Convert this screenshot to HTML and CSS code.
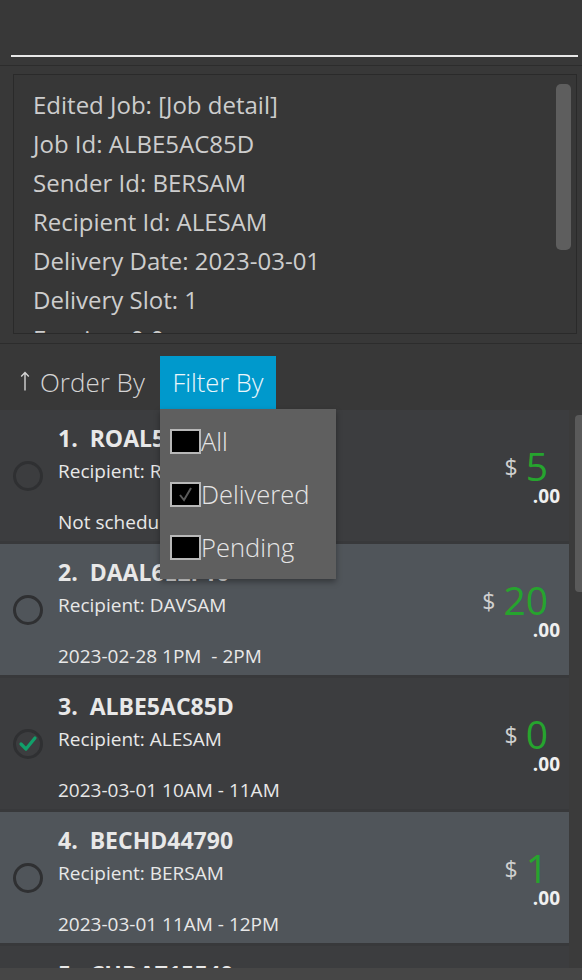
FILE: index.html
```html
<!DOCTYPE html>
<html>
<head>
<meta charset="utf-8">
<link rel="stylesheet" href="styles.css">
</head>
<body>
<div class="app">
  <div class="cmd"><div class="cmd-line"></div></div>

  <div class="detail-wrap">
    <div class="detail">
      <div class="detail-text">
        <p>Edited Job: [Job detail]</p>
        <p>Job Id: ALBE5AC85D</p>
        <p>Sender Id: BERSAM</p>
        <p>Recipient Id: ALESAM</p>
        <p>Delivery Date: 2023-03-01</p>
        <p>Delivery Slot: 1</p>
        <p>Earning: 0.0</p>
      </div>
      <div class="vscroll"><div class="vthumb"></div></div>
    </div>
  </div>

  <div class="toolbar">
    <span class="order"><svg class="arrow" viewBox="0 0 10 20" width="10" height="20"><path d="M5 1.5 V19.5 M1.2 5.5 L5 1.5 L8.8 5.5" fill="none" stroke="#d4d4d4" stroke-width="1.4"/></svg>Order By</span>
    <div class="filter-wrap">
      <div class="filter">Filter By</div>
      <div class="menu">
        <div class="menu-row"><span class="cbox"></span><span class="mlabel">All</span></div>
        <div class="menu-row"><span class="cbox"><svg viewBox="0 0 31 25" width="31" height="25"><path d="M10 13 L14 18 L21 6" fill="none" stroke="#5a5a5a" stroke-width="2"/></svg></span><span class="mlabel">Delivered</span></div>
        <div class="menu-row"><span class="cbox"></span><span class="mlabel">Pending</span></div>
      </div>
    </div>
  </div>

  <div class="list-wrap">
    <div class="list">
      <div class="item">
        <span class="radio"></span>
        <div class="info">
          <div class="title">1.  ROAL5B7C2E</div>
          <div class="sub">Recipient: ROBSAM</div>
          <div class="date">Not scheduled</div>
        </div>
        <div class="price"><div class="amt"><span class="cur">$</span><span class="num">5</span></div><div class="cents">.00</div></div>
      </div>
      <div class="item alt">
        <span class="radio"></span>
        <div class="info">
          <div class="title">2.  DAAL6E2F10</div>
          <div class="sub">Recipient: DAVSAM</div>
          <div class="date">2023-02-28 1PM  - 2PM</div>
        </div>
        <div class="price"><div class="amt"><span class="cur">$</span><span class="num">20</span></div><div class="cents">.00</div></div>
      </div>
      <div class="item">
        <span class="radio done"><svg viewBox="0 0 30 30" width="30" height="30"><path d="M8 15 L13 20 L22 9" fill="none" stroke="#11a06a" stroke-width="3.2" stroke-linecap="round" stroke-linejoin="round"/></svg></span>
        <div class="info">
          <div class="title">3.  ALBE5AC85D</div>
          <div class="sub">Recipient: ALESAM</div>
          <div class="date">2023-03-01 10AM - 11AM</div>
        </div>
        <div class="price"><div class="amt"><span class="cur">$</span><span class="num">0</span></div><div class="cents">.00</div></div>
      </div>
      <div class="item alt">
        <span class="radio"></span>
        <div class="info">
          <div class="title">4.  BECHD44790</div>
          <div class="sub">Recipient: BERSAM</div>
          <div class="date">2023-03-01 11AM - 12PM</div>
        </div>
        <div class="price"><div class="amt"><span class="cur">$</span><span class="num">1</span></div><div class="cents">.00</div></div>
      </div>
      <div class="item">
        <span class="radio"></span>
        <div class="info">
          <div class="title">5.  CHDA715E40</div>
          <div class="sub">Recipient: CHASAM</div>
          <div class="date">Not scheduled</div>
        </div>
        <div class="price"><div class="amt"><span class="cur">$</span><span class="num">3</span></div><div class="cents">.00</div></div>
      </div>
    </div>
    <div class="list-scroll"><div class="lthumb"></div></div>
  </div>

  <div class="status"></div>
</div>
</body>
</html>
```

FILE: styles.css
```css
* { box-sizing: border-box; }
html, body { margin: 0; padding: 0; }
body {
  background: #383838;
  font-family: "Open Sans", "Noto Sans", sans-serif;
  width: 582px;
  height: 980px;
  overflow: hidden;
}
.app {
  display: flex;
  flex-direction: column;
  height: 980px;
}
.cmd {
  height: 66px;
  border-bottom: 1px solid #2c2c2c;
  padding: 55px 4px 0 11px;
}
.cmd-line {
  height: 2px;
  background: #e8e8e8;
}
.detail-wrap {
  height: 278px;
  padding: 8px 5px 0 13px;
  border-bottom: 1px solid #2c2c2c;
}
.detail {
  height: 260px;
  border: 1px solid #2a2a2a;
  background: #373737;
  display: flex;
  overflow: hidden;
}
.detail-text {
  flex: 1;
  padding: 10px 0 0 19px;
  overflow: hidden;
}
.detail-text p {
  margin: 0;
  height: 39px;
  line-height: 39px;
  font-size: 24px;
  color: #cdcdcd;
  white-space: nowrap;
}
.vscroll {
  width: 21px;
  padding: 9px 5px 0 1px;
}
.vthumb {
  height: 166px;
  background: #5e5e5e;
  border-radius: 5px;
}
.toolbar {
  height: 66px;
  display: flex;
  align-items: center;
  padding: 11px 0 1px 20px;
}
.order {
  width: 140px;
  font-size: 26px;
  font-weight: 300;
  color: #d4d4d4;
  display: flex;
  align-items: center;
}
.arrow { margin: 0 10px 2px 0; flex: 0 0 10px; }
.filter-wrap {
  position: relative;
  height: 53px;
}
.filter {
  height: 53px;
  width: 116px;
  background: #0099cc;
  color: #eaf6fb;
  font-size: 25.5px;
  font-weight: 300;
  display: flex;
  align-items: center;
  justify-content: center;
}
.menu {
  position: absolute;
  left: 0;
  top: 53px;
  width: 176px;
  height: 170px;
  background: #5f5f5f;
  padding: 6px 0 0 10px;
  box-shadow: 0 3px 6px rgba(0,0,0,0.35);
  z-index: 5;
}
.menu-row {
  height: 53px;
  display: flex;
  align-items: center;
}
.cbox {
  width: 31px;
  height: 25px;
  background: #000;
  border: 2px solid #b8b8b8;
  display: flex;
  position: relative;
}
.cbox svg { position: absolute; left: -2px; top: -2px; }
.mlabel {
  font-size: 25.5px;
  font-weight: 300;
  color: #e6e6e6;
}
.list-wrap {
  height: 558px;
  display: flex;
  overflow: hidden;
}
.list {
  width: 569px;
  background: #38393b;
  display: flex;
  flex-direction: column;
  gap: 3px;
}
.item {
  flex: 0 0 131px;
  background: #3c3d3f;
  display: flex;
  align-items: center;
  padding: 0 9px 0 13px;
}
.item.alt { background: #50555a; }
.radio {
  width: 30px;
  height: 30px;
  border: 3px solid #2f3032;
  border-radius: 50%;
  flex: 0 0 30px;
  position: relative;
}
.radio svg { position: absolute; left: -3px; top: -3px; }
.info {
  flex: 1;
  align-self: stretch;
  padding: 11px 0 0 15px;
  color: #e8e8e8;
}
.title {
  font-size: 23px;
  font-weight: 700;
  height: 34px;
  line-height: 34px;
  white-space: pre;
}
.sub {
  font-size: 19px;
  height: 32px;
  line-height: 32px;
}
.date {
  font-size: 19px;
  margin-top: 19px;
  line-height: 32px;
  white-space: pre;
}
.price {
  display: flex;
  flex-direction: column;
  align-items: flex-end;
  padding-top: 2px;
}
.amt {
  display: flex;
  align-items: center;
  margin-right: 12px;
  height: 38px;
}
.cur {
  font-size: 23px;
  color: #cfcfcf;
  margin-right: 8px;
  padding-top: 3px;
}
.num {
  font-size: 39px;
  color: #26a42e;
  line-height: 38px;
}
.cents {
  font-size: 19px;
  font-weight: 700;
  color: #f0f0f0;
  line-height: 22px;
}
.list-scroll {
  width: 13px;
  background: #3b3b3b;
  padding: 5px 0 0 6px;
}
.lthumb {
  height: 177px;
  background: #5a5a5a;
  border-radius: 4px 0 0 4px;
}
.status {
  height: 12px;
  background: #464646;
}
```
